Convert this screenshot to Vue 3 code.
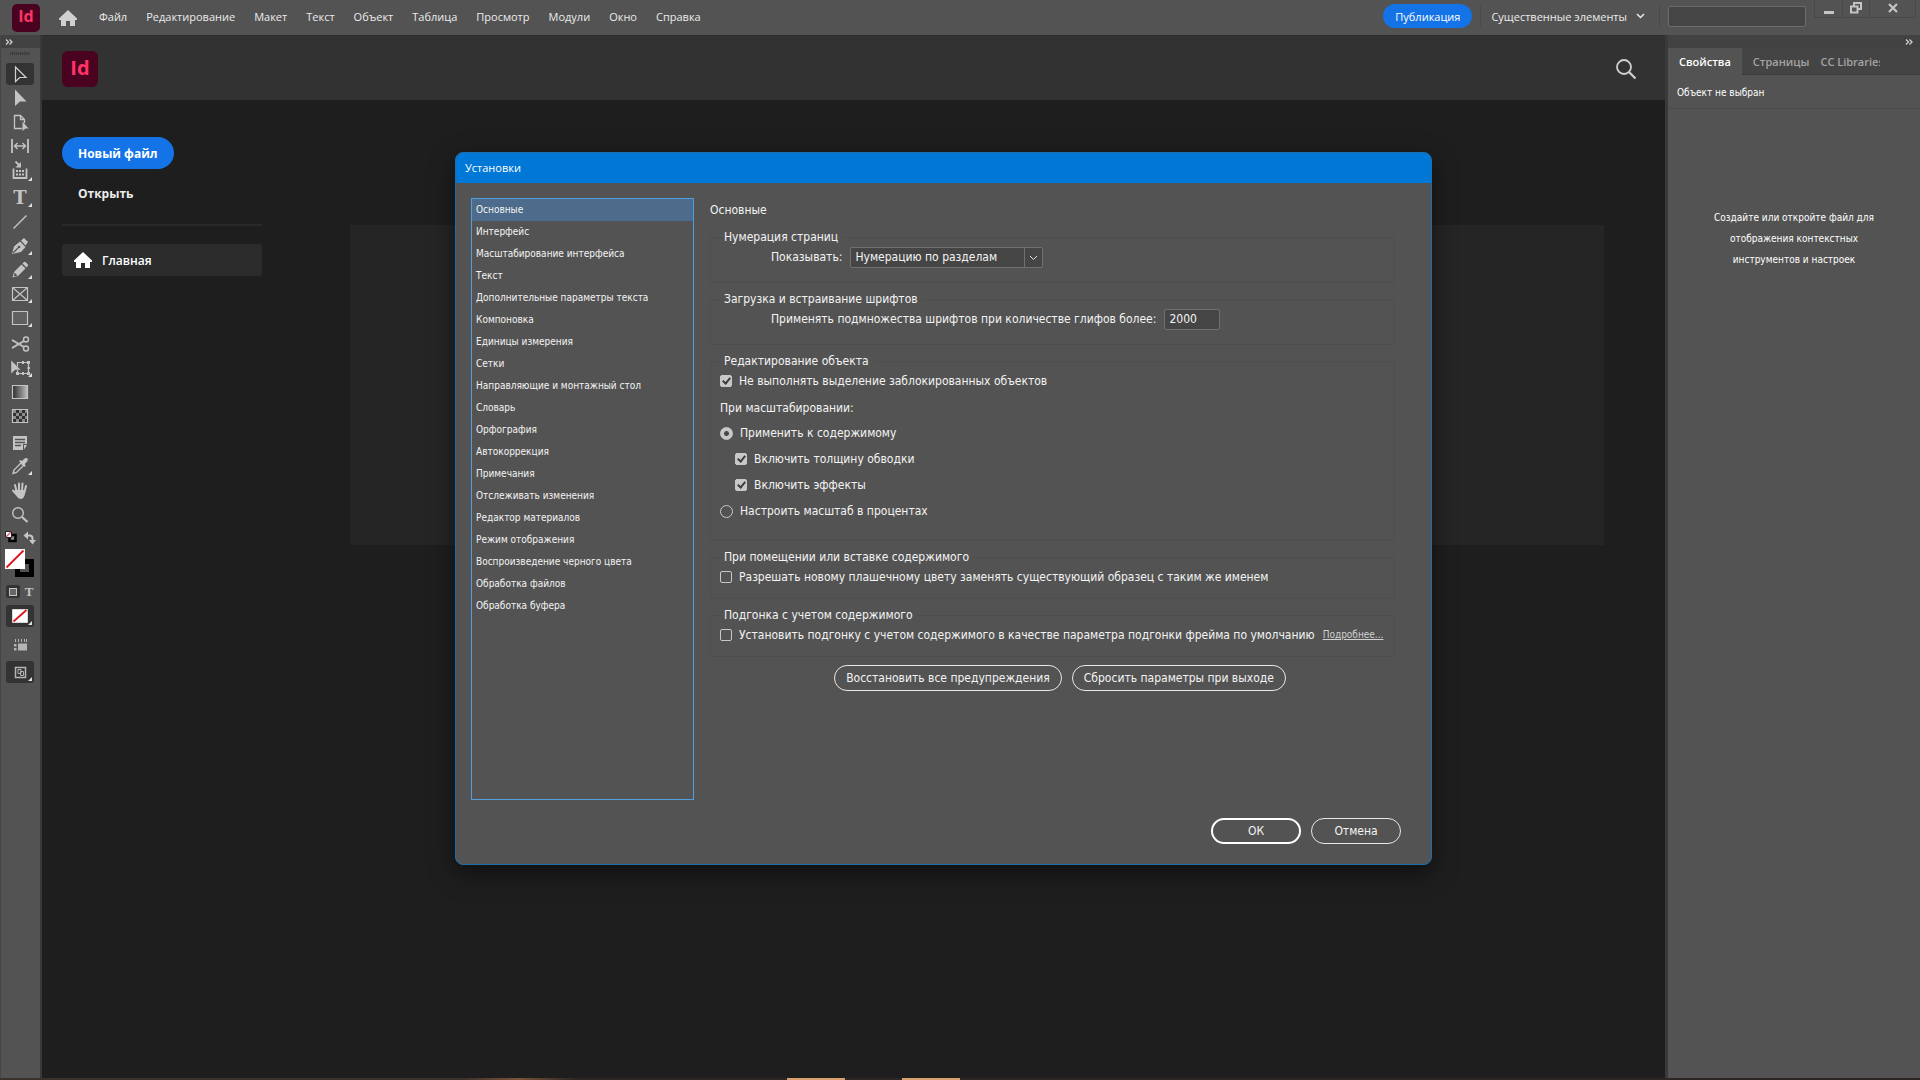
<template>
  <div class="app">
    <!-- Menu bar -->
    <header class="menubar">
      <span class="logo">Id</span>
      <a href="#" class="home-link" aria-label="Главная">
        <svg width="20" height="18" viewBox="0 0 20 18"><path :d="homePath" fill="#d0d0d0" /></svg>
      </a>
      <nav class="menu">
        <a v-for="item in menu" :key="item" href="#">{{ item }}</a>
      </nav>
      <div class="menubar-right">
        <button class="publish">Публикация</button>
        <button class="workspace">
          <span>Существенные элементы</span>
          <svg width="9" height="6" viewBox="0 0 9 6"><path d="M1 1l3.500 3.500L8 1" fill="none" stroke="currentColor" stroke-width="1.500" /></svg>
        </button>
        <input class="search" type="text" aria-label="Поиск" />
        <div class="window-controls">
          <button aria-label="Свернуть">
            <svg width="14" height="14" viewBox="0 0 14 14"><path d="M2 10h10v3H2z" fill="currentColor" /></svg>
          </button>
          <button aria-label="Восстановить">
            <svg width="14" height="14" viewBox="0 0 14 14"><path d="M5 5V2h7v6H8.500M2 5.500h6.500v6H2z" fill="none" stroke="currentColor" stroke-width="2" /></svg>
          </button>
          <button class="wide" aria-label="Закрыть">
            <svg width="14" height="14" viewBox="0 0 14 14"><path d="M3 3l8 8M11 3l-8 8" stroke="currentColor" stroke-width="2.200" /></svg>
          </button>
        </div>
      </div>
    </header>

    <div class="workspace-area">
      <!-- Tools -->
      <aside class="toolbar">
        <div class="panel-head left">
          <svg width="8" height="6" viewBox="0 0 8 6"><path :d="arrowsPath" fill="none" stroke="#d0d0d0" stroke-width="1.300" /></svg>
        </div>
        <div class="grip"></div>
        <div class="tool-groups">
          <div v-for="(group, g) in tools" :key="g" class="tool-group">
            <button
              v-for="tool in group"
              :key="tool.name"
              class="tool"
              :class="{ active: tool.name === activeTool }"
              :aria-label="tool.name"
              @click="activeTool = tool.name"
            >
              <svg width="28" height="22" viewBox="0 0 28 22" v-html="tool.icon + (tool.more ? corner : '')"></svg>
            </button>
          </div>
        </div>
        <svg class="swatches" width="32" height="52" viewBox="0 0 32 52">
          <!-- default colours -->
          <path d="M4.500 8h6v6h-6z" fill="#888" stroke="#000" stroke-width="2.500" />
          <path d="M.5 4.500h6v6h-6z" fill="#fff" stroke="#222" />
          <path d="M1 10l5-5" stroke="#d8566a" stroke-width="1.200" />
          <!-- swap -->
          <path d="M22 8.500h2.500q3 0 3 3V14" fill="none" stroke="#c4c4c4" stroke-width="2" />
          <path d="M23 4.500v8l-4.500-4z M24 13h7l-3.500 4.500z" fill="#c4c4c4" />
          <!-- stroke and fill -->
          <path d="M12.500 34.500h14v13h-14z" fill="none" stroke="#000" stroke-width="5" />
          <path d="M0 22h20v20H0z" fill="#fff" />
          <path d="M1.500 40.500l17-17" stroke="#e0131f" stroke-width="1.800" />
        </svg>
        <div class="format-row">
          <button class="format active" aria-label="Контейнер"><span class="square"></span></button>
          <button class="format" aria-label="Форматирование текста">T</button>
        </div>
        <button class="tool active" aria-label="Нет">
          <svg width="28" height="22" viewBox="0 0 28 22">
            <path d="M6.500 4.500h15v13h-15z" fill="#fff" stroke="#d8d8d8" />
            <path d="M7.500 16.500l13-11.500" stroke="#e0131f" stroke-width="1.800" />
            <g v-html="corner"></g>
          </svg>
        </button>
        <button class="tool spaced" aria-label="Параметры просмотра">
          <svg width="28" height="22" viewBox="0 0 28 22">
            <path d="M12 9.500h9v7h-9zM8 10h2.500v2.500H8zM8 14h2.500v2.500H8z" fill="#b4b4b4" />
            <path d="M9.500 5v3M12.500 5v3M15.500 5v3M18.500 5v3M20.500 5v3" stroke="#b4b4b4" />
          </svg>
        </button>
        <button class="tool active spaced-sm" aria-label="Режим экрана">
          <svg width="28" height="22" viewBox="0 0 28 22">
            <path d="M9.500 6.500h10v10h-10z" fill="none" stroke="#b4b4b4" stroke-width="1.500" />
            <path d="M12 8.500h3v4h-3zM14.500 10.500h3v4h-3z" fill="none" stroke="#b4b4b4" />
            <g v-html="corner"></g>
          </svg>
        </button>
      </aside>

      <!-- Start screen -->
      <main class="start">
        <div class="start-head">
          <span class="logo large">Id</span>
          <button class="icon-button" aria-label="Поиск">
            <svg width="22" height="22" viewBox="0 0 22 22">
              <circle cx="9" cy="9" r="7" fill="none" stroke="#d0d0d0" stroke-width="1.800" />
              <path d="M14 14l6.500 6.500" stroke="#d0d0d0" stroke-width="2.200" />
            </svg>
          </button>
        </div>
        <div class="start-body">
          <div class="start-side">
            <button class="new-file">Новый файл</button>
            <button class="open-file">Открыть</button>
            <a href="#" class="side-link">
              <svg width="20" height="18" viewBox="0 0 20 18"><path :d="homePath" fill="#fff" /></svg>
              <span>Главная</span>
            </a>
          </div>
          <div class="start-card"></div>
        </div>
      </main>

      <!-- Properties -->
      <aside class="properties">
        <div class="panel-head right">
          <svg width="8" height="6" viewBox="0 0 8 6"><path :d="arrowsPath" fill="none" stroke="#d0d0d0" stroke-width="1.300" /></svg>
        </div>
        <div class="tabs">
          <button class="tab active">Свойства</button>
          <button class="tab">Страницы</button>
          <button class="tab clipped">CC Libraries</button>
        </div>
        <p class="selection">Объект не выбран</p>
        <p class="hint">Создайте или откройте файл для<br />отображения контекстных<br />инструментов и настроек</p>
      </aside>
    </div>

    <div class="desktop-edge"></div>

    <!-- Preferences dialog -->
    <section class="dialog" role="dialog" aria-labelledby="dialog-title">
      <h1 id="dialog-title" class="dialog-title">Установки</h1>
      <div class="dialog-body">
        <ul class="sections">
          <li v-for="name in sections" :key="name">
            <button :class="{ active: name === section }" @click="section = name">{{ name }}</button>
          </li>
        </ul>

        <form class="settings" @submit.prevent>
          <h2>{{ section }}</h2>

          <fieldset class="group">
            <legend>Нумерация страниц</legend>
            <div class="field">
              <label for="numbering">Показывать:</label>
              <span class="select-box">
                <select id="numbering">
                  <option>Нумерацию по разделам</option>
                  <option>Абсолютную нумерацию</option>
                </select>
                <svg width="9" height="6" viewBox="0 0 9 6"><path d="M1 1l3.500 3.500L8 1" fill="none" stroke="#e0e0e0" /></svg>
              </span>
            </div>
          </fieldset>

          <fieldset class="group">
            <legend>Загрузка и встраивание шрифтов</legend>
            <div class="field">
              <label for="glyphs">Применять подмножества шрифтов при количестве глифов более:</label>
              <input id="glyphs" v-model="glyphs" type="text" />
            </div>
          </fieldset>

          <fieldset class="group tall">
            <legend>Редактирование объекта</legend>
            <label class="check"><input type="checkbox" checked /><span>Не выполнять выделение заблокированных объектов</span></label>
            <p class="caption">При масштабировании:</p>
            <div class="options">
              <label class="check"><input v-model="scaling" type="radio" value="content" /><span>Применить к содержимому</span></label>
              <label class="check nested"><input type="checkbox" checked /><span>Включить толщину обводки</span></label>
              <label class="check nested"><input type="checkbox" checked /><span>Включить эффекты</span></label>
              <label class="check"><input v-model="scaling" type="radio" value="percent" /><span>Настроить масштаб в процентах</span></label>
            </div>
          </fieldset>

          <fieldset class="group short">
            <legend>При помещении или вставке содержимого</legend>
            <label class="check"><input type="checkbox" /><span>Разрешать новому плашечному цвету заменять существующий образец с таким же именем</span></label>
          </fieldset>

          <fieldset class="group short">
            <legend>Подгонка с учетом содержимого</legend>
            <div class="check-line">
              <label class="check"><input type="checkbox" /><span>Установить подгонку с учетом содержимого в качестве параметра подгонки фрейма по умолчанию</span></label>
              <a href="#">Подробнее...</a>
            </div>
          </fieldset>

          <div class="resets">
            <button type="button" class="pill">Восстановить все предупреждения</button>
            <button type="button" class="pill">Сбросить параметры при выходе</button>
          </div>
        </form>
      </div>
      <footer class="dialog-footer">
        <button class="pill primary">ОК</button>
        <button class="pill">Отмена</button>
      </footer>
    </section>
  </div>
</template>

<script setup>
import { ref } from 'vue'

const menu = ['Файл', 'Редактирование', 'Макет', 'Текст', 'Объект', 'Таблица', 'Просмотр', 'Модули', 'Окно', 'Справка']

const sections = [
  'Основные',
  'Интерфейс',
  'Масштабирование интерфейса',
  'Текст',
  'Дополнительные параметры текста',
  'Компоновка',
  'Единицы измерения',
  'Сетки',
  'Направляющие и монтажный стол',
  'Словарь',
  'Орфография',
  'Автокоррекция',
  'Примечания',
  'Отслеживать изменения',
  'Редактор материалов',
  'Режим отображения',
  'Воспроизведение черного цвета',
  'Обработка файлов',
  'Обработка буфера'
]

const section = ref('Основные')
const activeTool = ref('Выделение')
const glyphs = ref('2000')
const scaling = ref('content')

const homePath = 'M10 1L1 9.500V11h2v6h5v-5h4v5h5v-6h2V9.500z'
const arrowsPath = 'M1 .5L3.500 3 1 5.500M4.500 .5L7 3 4.500 5.500'
const corner = '<path d="M26 16v4h-4z" fill="#e0e0e0"/>'

// icons are drawn on a 28x22 grid
const tools = [
  [
    { name: 'Выделение', icon: '<path d="M9.500 4v14.500l4.200-4H20z" fill="none" stroke="#d0d0d0" stroke-width="1.200"/>' },
    { name: 'Частичное выделение', icon: '<path d="M9 2.500v16.500l5-4.500h6.500z" fill="#c4c4c4"/>' },
    { name: 'Страница', icon: '<path d="M16 17.500H8.500v-13h6l4 4V12M14.500 4.500v4h4" fill="none" stroke="#c4c4c4" stroke-width="1.300"/><path d="M16.500 10.500v9.500l3-2.500h3z" fill="#c4c4c4"/>' },
    { name: 'Зазор', icon: '<path d="M6 4v14M22 4v14" stroke="#c4c4c4" stroke-width="1.800"/><path d="M9 11h10M11.500 8L8.500 11l3 3M16.500 8l3 3-3 3" fill="none" stroke="#c4c4c4" stroke-width="1.400"/>' }
  ],
  [
    { name: 'Сбор содержимого', more: true, icon: '<path d="M7.500 7.500v9.500h13V7.500" fill="none" stroke="#c4c4c4" stroke-width="1.800"/><path d="M9.500 .5l4 4" stroke="#c4c4c4" stroke-width="1.800"/><path d="M15 1v5.500H9.500z" fill="#c4c4c4"/><path d="M10 10h2M13 10h2M16 10h2M10 13.500h2M13 13.500h2M16 13.500h2" stroke="#c4c4c4" stroke-width="2"/>' }
  ],
  [
    { name: 'Текст', more: true, icon: '<text x="14" y="17" text-anchor="middle" font-family="DejaVu Serif, serif" font-weight="bold" font-size="18" fill="#c4c4c4">T</text>' },
    { name: 'Линия', icon: '<path d="M7.500 17.500l13-13" stroke="#c4c4c4" stroke-width="1.400"/>' },
    { name: 'Перо', more: true, icon: '<path d="M6 19l2-7.500 6-5 5.500 5.500-4.500 5z" fill="#c4c4c4"/><path d="M15 5.500L18 3l4 4-2.500 3.500z" fill="#c4c4c4"/><path d="M7 18l5-5" stroke="#535353" stroke-width="1.200"/><circle cx="13" cy="12" r="1.300" fill="#535353"/>' },
    { name: 'Карандаш', more: true, icon: '<path d="M6.500 18.500l1.500-5.500L15.500 5.500l4 4L12 17z" fill="#c4c4c4"/><path d="M16.500 4.500l1.500-1.500q1-.5 2 .5l1.500 1.500q1 1 .3 2l-1.300 1.500z" fill="#c4c4c4"/><path d="M8.500 13.500l3 3-3.500 1z" fill="#535353"/>' },
    { name: 'Прямоугольный фрейм', more: true, icon: '<path d="M6.500 4.500h15v13h-15zL21.500 17.500M21.500 4.500L6.500 17.500" fill="none" stroke="#c4c4c4" stroke-width="1.200"/>' },
    { name: 'Прямоугольник', more: true, icon: '<path d="M6.500 4.500h15v13h-15z" fill="#606060" stroke="#c4c4c4" stroke-width="1.200"/>' }
  ],
  [
    { name: 'Ножницы', icon: '<path d="M6 7l12 7M6 15l12-7" stroke="#c4c4c4" stroke-width="2"/><circle cx="20" cy="6.500" r="2.500" fill="none" stroke="#c4c4c4" stroke-width="1.400"/><circle cx="20" cy="15.500" r="2.500" fill="none" stroke="#c4c4c4" stroke-width="1.400"/>' },
    { name: 'Свободное трансформирование', more: true, icon: '<path d="M11.500 5.500h11v11h-11z" fill="none" stroke="#c4c4c4" stroke-width="1.200"/><path d="M10 15h3v3h-3zM21 15h3v3h-3zM21 4h3v3h-3zM16 4h2v3h-2zM16 15h2v3h-2zM21.500 10h2.500v2h-2.500z" fill="#c4c4c4"/><path d="M5 3v14l4-4h6z" fill="#c4c4c4" stroke="#535353" stroke-width=".5"/>' },
    { name: 'Градиент', icon: '<defs><linearGradient id="grad"><stop offset="0" stop-color="#2c2c2c"/><stop offset="1" stop-color="#c0c0c0"/></linearGradient></defs><path d="M6.500 4.500h15v13h-15z" fill="url(#grad)" stroke="#c4c4c4" stroke-width="1.200"/>' },
    { name: 'Растушевка градиента', icon: '<path d="M6.500 4.500h15v13h-15z" fill="#303030" stroke="#c4c4c4" stroke-width="1.200"/><path d="M7 5h3v3H7zM13 5h3v3h-3zM19 5h2v3h-2zM10 8h3v3h-3zM16 8h3v3h-3zM7 11h3v3H7zM13 11h3v3h-3zM19 11h2v3h-2zM10 14h3v3h-3zM16 14h3v3h-3z" fill="#8c8c8c"/>' }
  ],
  [
    { name: 'Примечание', icon: '<path d="M7 5h14v8h-4v6H7z" fill="#c4c4c4"/><path d="M18 14h3l-3 4.500z" fill="#c4c4c4"/><path d="M9 8.500h10M9 11.500h10M9 14.500h6" stroke="#535353" stroke-width="1.300"/>' },
    { name: 'Пипетка', more: true, icon: '<path d="M7 18.500l1-3.500 7-7 2.500 2.500-7 7z" fill="none" stroke="#c4c4c4" stroke-width="1.400"/><path d="M13 6l1.500-1 1.500 1 2.500-2.500q2-1.200 3 0 1 1.200-.3 3L18.700 9l1 1.500-1.500 1.500z" fill="#c4c4c4"/>' },
    { name: 'Рука', icon: '<path d="M10.500 12L9 6M13 11.500V4.500M16 11.500l.5-7M18.500 13l1.500-6M11 15l-4-3.500" stroke="#c4c4c4" stroke-width="2" stroke-linecap="round"/><path d="M9.500 11h10l-.5 4q-1 5-4.500 5-2.500 0-4-3L7 13z" fill="#c4c4c4"/>' },
    { name: 'Масштаб', icon: '<circle cx="12" cy="10" r="5.300" fill="none" stroke="#c4c4c4" stroke-width="1.400"/><path d="M16 14l5.500 5" stroke="#c4c4c4" stroke-width="2.300"/>' }
  ]
]
</script>

<style>
body {
  margin: 0;
  background: #1e1e1e;
}
</style>

<style scoped>
.app {
  --panel: #535353;
  --ui: "Open Sans", "Noto Sans", sans-serif;
  --dialog: "DejaVu Sans Condensed", "DejaVu Sans", sans-serif;
  position: relative;
  display: flex;
  flex-direction: column;
  height: 100vh;
  overflow: hidden;
  font-family: var(--ui);
  font-size: 11px;
  color: #ececec;
}

.app * {
  box-sizing: border-box;
}

button,
input,
select {
  font: inherit;
  color: inherit;
}

button {
  padding: 0;
  border: 0;
  background: none;
  white-space: nowrap;
}

a {
  color: inherit;
  text-decoration: none;
}

svg {
  display: block;
}

h1,
h2,
p,
ul {
  margin: 0;
  padding: 0;
  font-weight: 400;
}

/* Menu bar */
.menubar {
  display: flex;
  align-items: center;
  flex: none;
  height: 35px;
  padding-left: 12px;
  background: var(--panel);
}

.logo {
  display: flex;
  align-items: center;
  justify-content: center;
  width: 28px;
  height: 28px;
  padding-bottom: 3px;
  border-radius: 5px;
  background: #49021f;
  color: #ff3366;
  font-size: 16px;
  font-weight: 700;
}

.logo.large {
  width: 36px;
  height: 36px;
  border-radius: 6px;
  font-size: 20px;
}

.home-link {
  margin: 0 21px 0 18px;
}

.menu {
  display: flex;
  gap: 19px;
  padding-bottom: 2px;
}

.menubar-right {
  display: flex;
  align-items: center;
  height: 100%;
  margin-left: auto;
}

.publish {
  height: 24px;
  margin-bottom: 3px;
  padding: 0 12px;
  border-radius: 12px;
  background: #1473e6;
  color: #fff;
}

.workspace {
  display: flex;
  align-items: center;
  gap: 9px;
  height: 20px;
  margin: 0 8px;
  margin-bottom: 3px;
  padding: 0 14px 0 10px;
  border: solid #494949;
  border-width: 0 1px;
}

.search {
  width: 138px;
  height: 21px;
  margin-bottom: 2px;
  border: 1px solid #6c6c6c;
  border-radius: 2px;
  background: #454545;
}

.window-controls {
  display: flex;
  align-self: flex-start;
  margin: 0 4px 0 8px;
  border: 1px solid #484848;
  border-top: 0;
  color: #c4c4c4;
}

.window-controls button {
  display: flex;
  justify-content: center;
  width: 27px;
  height: 17px;
  padding-top: 1px;
}

.window-controls button + button {
  border-left: 1px solid #484848;
}

.window-controls .wide {
  width: 46px;
}

.workspace-area {
  display: flex;
  flex: 1;
  min-height: 0;
}

.panel-head {
  display: flex;
  align-items: center;
  flex: none;
  height: 13px;
  padding: 0 7px 0 4px;
  background: #424242;
}

.panel-head.right {
  justify-content: flex-end;
}

/* Toolbar */
.toolbar {
  display: flex;
  flex-direction: column;
  flex: none;
  width: 42px;
  border-right: 2px solid #383838;
  border-left: 1px solid #454545;
  background: var(--panel);
}

.grip {
  flex: none;
  width: 20px;
  height: 3px;
  margin: 4px 0 8px 9px;
  background: repeating-linear-gradient(90deg, #3c3c3c 0 1px, #4c4c4c 1px 2px);
}

.tool-groups {
  display: flex;
  flex-direction: column;
  gap: 4px;
}

.tool-group {
  display: flex;
  flex-direction: column;
  gap: 2px;
}

.tool {
  flex: none;
  width: 28px;
  height: 22px;
  margin-left: 5px;
  border-radius: 3px;
}

.tool.active {
  background: #333;
}

.tool.spaced {
  margin-top: 7px;
}

.tool.spaced-sm {
  margin-top: 5px;
}

.swatches {
  flex: none;
  margin: 2px 0 0 4px;
}

.format-row {
  display: flex;
  gap: 2px;
  margin: 6px 0 7px 5px;
}

.format {
  display: flex;
  align-items: center;
  justify-content: center;
  width: 14px;
  height: 13px;
  border-radius: 2px;
  color: #c4c4c4;
  font-family: "Liberation Serif", serif;
  font-size: 13px;
  font-weight: 700;
}

.format.active {
  background: #333;
}

.square {
  width: 8px;
  height: 8px;
  border: 1px solid #c4c4c4;
  background: #666;
}

/* Start screen */
.start {
  display: flex;
  flex-direction: column;
  flex: 1;
  min-width: 0;
  background: #1e1e1e;
}

.start-head {
  display: flex;
  align-items: center;
  justify-content: space-between;
  flex: none;
  height: 65px;
  padding: 1px 28px 0 20px;
  border-top: 1px solid #2c2c2c;
  background: #323232;
}

.start-body {
  display: flex;
  align-items: flex-start;
  gap: 88px;
  padding: 37px 61px 0 20px;
}

.start-side {
  display: flex;
  flex-direction: column;
  align-items: flex-start;
  width: 200px;
}

.new-file,
.open-file {
  height: 32px;
  padding: 0 16px;
  border-radius: 16px;
  font-size: 12px;
  font-weight: 700;
}

.new-file {
  background: #1473e6;
  color: #fff;
}

.open-file {
  margin-top: 8px;
}

.side-link {
  display: flex;
  align-items: center;
  gap: 9px;
  width: 100%;
  height: 32px;
  margin-top: 35px;
  padding-left: 11px;
  border-radius: 3px;
  background: #2c2c2c;
  color: #fff;
  font-size: 12px;
  font-weight: 600;
  position: relative;
}

.side-link::before {
  content: "";
  position: absolute;
  top: -20px;
  left: 0;
  width: 100%;
  height: 2px;
  background: #292929;
}

.start-card {
  flex: 1;
  height: 320px;
  margin-top: 88px;
  background: #252525;
}

/* Properties */
.properties {
  flex: none;
  width: 255px;
  border-left: 3px solid #3a3a3a;
  background: var(--panel);
}

.tabs {
  display: flex;
  height: 27px;
  border-bottom: 1px solid #3c3c3c;
  background: #444;
}

.tab {
  height: 27px;
  padding: 0 11px;
  color: #a4a4a4;
  font-size: 11px;
  font-weight: 600;
}

.tab.active {
  background: var(--panel);
  color: #fff;
}

.tab.clipped {
  width: 60px;
  padding: 0;
  overflow: hidden;
  text-align: left;
}

.selection,
.hint {
  color: #fff;
  font-family: var(--dialog);
  font-size: 10px;
}

.selection {
  height: 34px;
  padding-left: 9px;
  border-bottom: 1px solid #4b4b4b;
  line-height: 36px;
}

.hint {
  margin-top: 98px;
  line-height: 21px;
  text-align: center;
}

/* Strip of desktop below the window */
.desktop-edge {
  flex: none;
  height: 2px;
  background: linear-gradient(90deg, #3a302c 0 24%, #7a5238 27%, #2c2624 30% 41%, #d9a070 41% 44%, #2c2624 44% 47%, #d9a070 47% 50%, #2c2624 50%);
}

/* Dialog */
.dialog {
  position: absolute;
  top: 152px;
  left: 455px;
  display: flex;
  flex-direction: column;
  width: 977px;
  border: 1px solid #1a6fae;
  border-radius: 8px;
  overflow: hidden;
  background: var(--panel);
  box-shadow: 0 8px 24px rgba(0, 0, 0, 0.5);
  color: #f4f4f4;
  font-family: var(--dialog);
  font-size: 12px;
  line-height: 16px;
}

.dialog-title {
  height: 30px;
  padding-left: 9px;
  background: #0078d7;
  color: #fff;
  font-family: var(--ui);
  font-size: 11px;
  line-height: 30px;
}

.dialog-body {
  display: flex;
  gap: 16px;
  padding: 15px 36px 0 15px;
}

.sections {
  flex: none;
  width: 223px;
  height: 602px;
  border: 1px solid #4f9fe0;
  list-style: none;
}

.sections button {
  display: block;
  width: 100%;
  height: 22px;
  padding-left: 4px;
  font-size: 10px;
  text-align: left;
}

.sections button.active {
  background: #4d6b8a;
}

.settings {
  display: flex;
  flex-direction: column;
  flex: 1;
  gap: 8px;
  min-width: 0;
  padding-top: 4px;
}

.settings h2 {
  margin-bottom: 3px;
  font-size: 12px;
}

.group {
  height: 54px;
  min-width: 0;
  margin: 0;
  padding: 1px 8px 0 9px;
  border: 1px solid #4e4e4e;
}

.group.tall {
  height: 188px;
}

.group.short {
  height: 50px;
}

.group legend {
  height: 16px;
  padding: 0 4px;
}

.field {
  display: flex;
  align-items: center;
  gap: 8px;
  height: 22px;
  padding-left: 51px;
}

.select-box {
  position: relative;
}

.select-box select {
  display: block;
  width: 193px;
  height: 21px;
  padding: 0 20px 0 4px;
  border: 1px solid #707070;
  border-radius: 2px;
  appearance: none;
  background: linear-gradient(#707070, #707070) right 17px top / 1px 100% no-repeat #454545;
}

.select-box svg {
  position: absolute;
  top: 8px;
  right: 5px;
}

#glyphs {
  width: 56px;
  height: 21px;
  padding: 0 4px;
  border: 1px solid #707070;
  border-radius: 2px;
  background: #454545;
}

.check {
  display: flex;
  align-items: center;
  gap: 7px;
  height: 22px;
  white-space: nowrap;
}

.check input {
  flex: none;
  width: 12px;
  height: 12px;
  margin: 0;
  border: 1px solid #c8c8c8;
  border-radius: 2px;
  appearance: none;
}

.check input[type="radio"] {
  width: 13px;
  height: 13px;
  border-radius: 50%;
}

.check input[type="radio"]:checked {
  background: radial-gradient(circle, #484848 2px, #c8c8c8 3px);
}

.check input[type="checkbox"]:checked {
  display: flex;
  align-items: center;
  justify-content: center;
  background: #c8c8c8;
}

.check input[type="checkbox"]:checked::after {
  content: "";
  box-sizing: border-box;
  flex: none;
  width: 5px;
  height: 8px;
  margin-bottom: 2px;
  border: solid #3c3c3c;
  border-width: 0 2px 2px 0;
  transform: rotate(40deg);
}

.caption {
  margin: 8px 0 6px;
}

.options {
  display: flex;
  flex-direction: column;
  gap: 4px;
}

.nested {
  padding-left: 15px;
}

.check-line {
  display: flex;
  align-items: center;
  gap: 8px;
}

.check-line a {
  color: #d0d0d0;
  font-size: 10px;
  text-decoration: underline;
}

.resets {
  display: flex;
  justify-content: center;
  gap: 10px;
  padding-left: 15px;
}

.pill {
  height: 26px;
  padding: 0 11px;
  border: 1px solid #e8e8e8;
  border-radius: 13px;
}

.dialog-footer {
  display: flex;
  justify-content: flex-end;
  gap: 10px;
  padding: 18px 30px 20px;
}

.dialog-footer .pill {
  width: 90px;
}

.pill.primary {
  border: 2px solid #fff;
}
</style>
